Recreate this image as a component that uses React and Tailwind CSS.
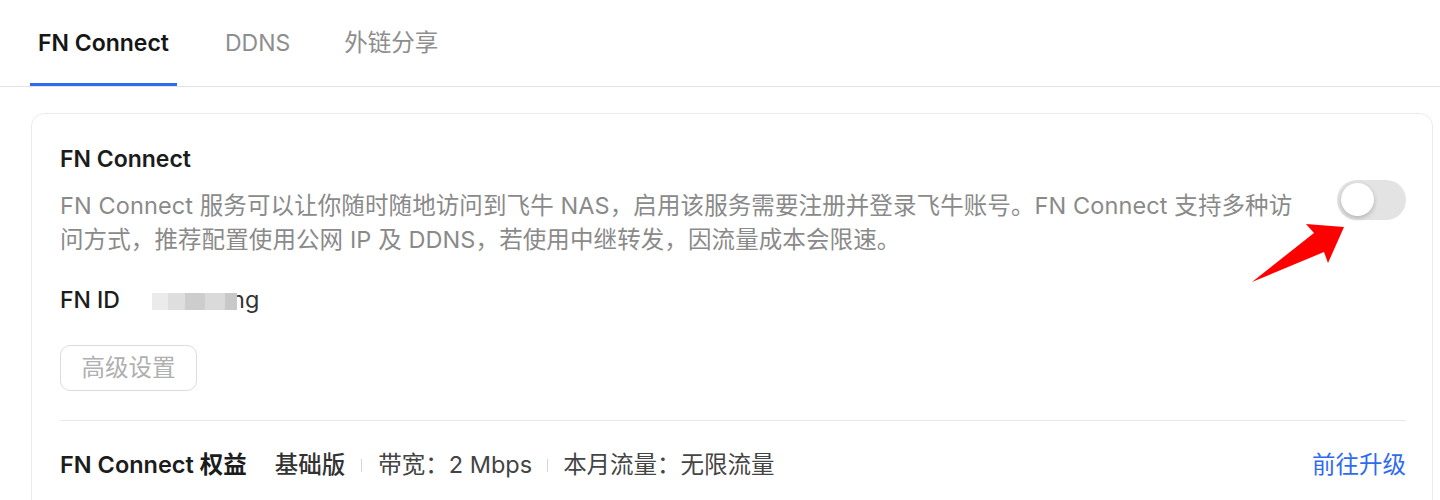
export default function App() {
  const font = { fontFamily: 'Inter, "Noto Sans CJK SC", sans-serif' };
  return (
    <div className="relative w-[1440px] h-[500px] overflow-hidden bg-white" style={font}>
      {/* Tabs */}
      <div className="flex h-[87px] items-stretch gap-[40px] border-b border-[#e2e2e2] pl-[30px]">
        <div className="flex flex-col justify-center relative px-[8px]">
          <span className="text-[23px] font-semibold text-[#161616] leading-none">FN Connect</span>
          <div className="absolute left-0 right-0 bottom-0 h-[3px] bg-[#2f6bf0]" />
        </div>
        <div className="flex flex-col justify-center px-[8px]">
          <span className="text-[23px] text-[#8e8e8e] leading-none">DDNS</span>
        </div>
        <div className="flex flex-col justify-center px-[6px]">
          <span className="text-[23.5px] text-[#8e8e8e] leading-none">外链分享</span>
        </div>
      </div>

      {/* Card */}
      <div className="ml-[31px] mr-[7px] mt-[26px] rounded-[13px] border border-[#ebebeb] pl-[28px] pr-[26px] pt-[28px] pb-[30px]">
        <div className="flex items-center">
          <div className="flex-1">
            <div className="text-[23px] font-semibold text-[#1c1c1c] leading-[34px]">FN Connect</div>
            <div className="mt-[13px] text-[23.5px] text-[#8a8a8a] leading-[34px] whitespace-nowrap tracking-[0.1px]">
              FN Connect 服务可以让你随时随地访问到飞牛 NAS，启用该服务需要注册并登录飞牛账号。FN Connect 支持多种访
              <br />
              问方式，推荐配置使用公网 IP 及 DDNS，若使用中继转发，因流量成本会限速。
            </div>
          </div>
          <div className="w-[69px] h-[40px] rounded-full bg-[#e3e3e3] flex items-center pl-[4px] shrink-0">
            <div className="w-[33px] h-[33px] rounded-full bg-white shadow-[0_2px_5px_rgba(0,0,0,0.22)]" />
          </div>
        </div>

        <div className="mt-[26px] flex items-center h-[34px]">
          <span className="w-[92px] text-[23px] font-medium text-[#1c1c1c]">FN ID</span>
          <div className="relative z-10 flex h-[17px] mt-[3px]">
            <div className="w-[16px] bg-[#ebebeb]" />
            <div className="w-[17px] bg-[#dedede]" />
            <div className="w-[20px] bg-[#cdcdcd]" />
            <div className="w-[20px] bg-[#dadada]" />
            <div className="w-[12px] bg-[#c8c8c8]" />
          </div>
          <span className="relative -ml-[6px] text-[23.5px] text-[#333]">ng</span>
        </div>

        <div className="mt-[28px] flex">
          <div className="h-[46px] w-[137px] rounded-[10px] border border-[#dcdcdc] flex items-center justify-center text-[23.5px] text-[#b0b0b0]">
            高级设置
          </div>
        </div>

        <div className="mt-[29px] h-px bg-[#e8e8e8]" />

        <div className="mt-[27px] flex items-center h-[34px] text-[23.5px]">
          <span className="font-semibold text-[#1c1c1c]">FN Connect 权益</span>
          <span className="ml-[28px] font-medium text-[#333]">基础版</span>
          <span className="mx-[16px] w-px h-[13px] bg-[#d6d6d6]" />
          <span className="text-[#444]">带宽：2 Mbps</span>
          <span className="mx-[15px] w-px h-[13px] bg-[#d6d6d6]" />
          <span className="text-[#444]">本月流量：无限流量</span>
          <span className="ml-auto text-[#2f6bf0]">前往升级</span>
        </div>
      </div>

      {/* Annotation arrow */}
      <svg className="absolute left-0 top-0 pointer-events-none" width="1440" height="500" viewBox="0 0 1440 500">
        <polygon points="1344,227 1306,224 1314,233 1252,282 1324,252 1328,263" fill="#ff0000" />
      </svg>
    </div>
  );
}
